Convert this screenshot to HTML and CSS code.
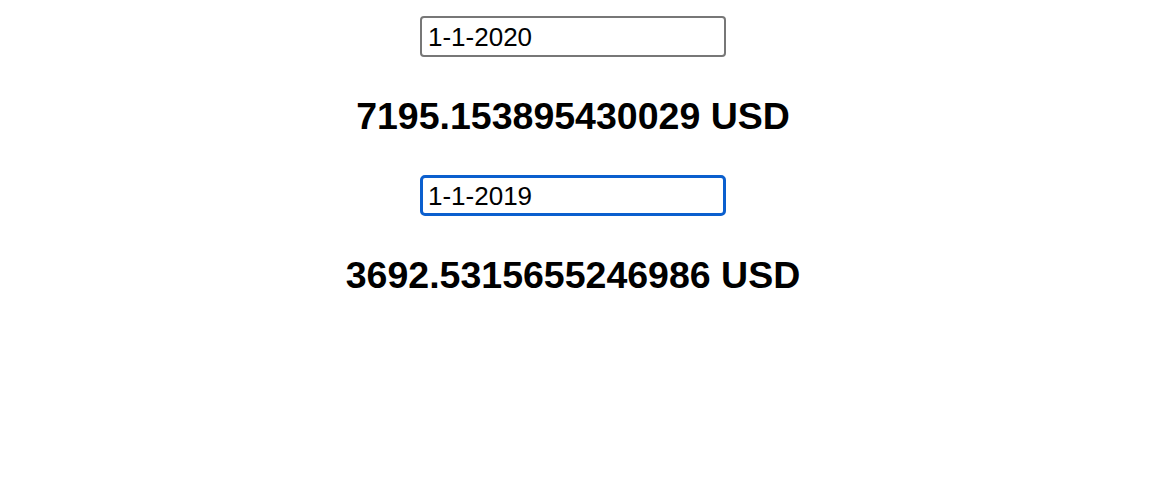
FILE: index.html
```html
<!DOCTYPE html>
<html lang="en">
<head>
<meta charset="utf-8">
<title>Price</title>
<link rel="stylesheet" href="styles.css">
</head>
<body>
<div class="app">
  <section class="block">
    <input class="date-input" type="text" value="1-1-2020">
    <h1 class="price">7195.153895430029 USD</h1>
  </section>
  <section class="block">
    <input class="date-input is-focused" type="text" value="1-1-2019">
    <h1 class="price">3692.5315655246986 USD</h1>
  </section>
</div>
</body>
</html>
```

FILE: styles.css
```css
html, body {
  margin: 0;
  padding: 0;
  background: #ffffff;
}

body {
  font-family: "Liberation Sans", Arial, Helvetica, sans-serif;
  color: #000000;
}

.app {
  display: flex;
  flex-direction: column;
  align-items: center;
  padding: 16px 10px 0 0;
}

.block {
  display: flex;
  flex-direction: column;
  align-items: center;
}

.date-input {
  box-sizing: border-box;
  width: 306px;
  height: 41px;
  margin: 0;
  padding: 2px 6px 0;
  border: 2px solid #777777;
  border-radius: 4px;
  font-family: "Liberation Sans", Arial, Helvetica, sans-serif;
  font-size: 26px;
  color: #000000;
  background: #ffffff;
  outline: none;
}

.date-input.is-focused {
  border: 3px solid #0b5fce;
  border-radius: 5px;
  padding: 2px 5px 0;
}

.price {
  margin: 38px 0 37px;
  font-size: 37.5px;
  line-height: 43px;
  font-weight: 700;
  white-space: nowrap;
}
```
